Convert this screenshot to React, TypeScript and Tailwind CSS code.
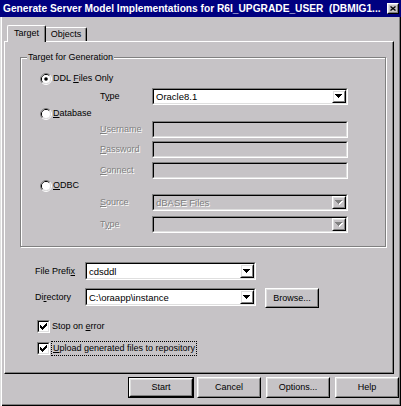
import React from "react";

const BG = "bg-[#c6c3c6]";

function U({ c }: { c: string }) {
  return <span className="underline underline-offset-[1px] decoration-1">{c}</span>;
}

function Sunken({
  className,
  inner,
  children,
}: {
  className: string;
  inner: string;
  children?: React.ReactNode;
}) {
  return (
    <div
      className={`flex border border-t-[#808080] border-l-[#808080] border-r-white border-b-white ${className}`}
    >
      <div
        className={`flex flex-1 min-w-0 border border-t-black border-l-black border-r-[#dfdfdf] border-b-[#dfdfdf] ${inner}`}
      >
        {children}
      </div>
    </div>
  );
}

function Raised({ className, children }: { className: string; children?: React.ReactNode }) {
  return (
    <div
      className={`flex border border-t-white border-l-white border-r-black border-b-black ${className}`}
    >
      <div className="flex flex-1 items-center justify-center border border-t-[#dfdfdf] border-l-[#dfdfdf] border-r-[#808080] border-b-[#808080]">
        {children}
      </div>
    </div>
  );
}

function Arrow({ disabled }: { disabled?: boolean }) {
  const d = "M0 0H7V1H6V2H5V3H4V4H3V3H2V2H1V1H0Z";
  return (
    <svg width="8" height="5" viewBox="0 0 8 5">
      {disabled && <path d={d} fill="#ffffff" transform="translate(1 1)" />}
      <path d={d} fill={disabled ? "#808080" : "#000000"} />
    </svg>
  );
}

function Combo({
  className,
  value,
  disabled,
}: {
  className: string;
  value?: string;
  disabled?: boolean;
}) {
  return (
    <Sunken className={className} inner={disabled ? BG : "bg-white"}>
      <div
        className={`flex flex-1 items-center pl-[2px] text-[9.5px] whitespace-nowrap overflow-hidden ${
          disabled ? "text-[#808080] [text-shadow:1px_1px_0_#fff]" : "text-black"
        }`}
      >
        {value}
      </div>
      <Raised className="w-[14px]">
        <Arrow disabled={disabled} />
      </Raised>
    </Sunken>
  );
}

function Radio({ checked }: { checked?: boolean }) {
  return (
    <svg width="12" height="12" viewBox="0 0 12 12" className="shrink-0">
      <path d="M2.11 9.89A5.5 5.5 0 0 1 9.89 2.11" stroke="#808080" fill="none" />
      <path d="M9.89 2.11A5.5 5.5 0 0 1 2.11 9.89" stroke="#ffffff" fill="none" />
      <path d="M2.82 9.18A4.5 4.5 0 0 1 9.18 2.82" stroke="#000000" fill="none" />
      <path d="M9.18 2.82A4.5 4.5 0 0 1 2.82 9.18" stroke="#dfdfdf" fill="none" />
      <circle cx="6" cy="6" r="4" fill="#ffffff" />
      {checked && <circle cx="6" cy="6" r="1.8" fill="#000000" />}
    </svg>
  );
}

function Check() {
  return (
    <Sunken className="w-[13px] h-[13px] shrink-0" inner="bg-white items-center justify-center">
      <svg width="7" height="7" viewBox="0 0 7 7">
        <path d="M0 2H1V3H2V4H3V3H4V2H5V1H6V0H7V3H6V4H5V5H4V6H3V7H2V6H1V5H0Z" fill="#000000" />
      </svg>
    </Sunken>
  );
}

function Dis({ children }: { children: React.ReactNode }) {
  return <span className="text-[#808080] [text-shadow:1px_1px_0_#fff]">{children}</span>;
}

function Field({ label, children, mt }: { label: React.ReactNode; children: React.ReactNode; mt: string }) {
  return (
    <div className={`flex items-center h-[17px] pl-[79px] ${mt}`}>
      <div className="w-[52px] whitespace-nowrap">{label}</div>
      {children}
    </div>
  );
}

function RadioRow({ label, checked, mt }: { label: React.ReactNode; checked?: boolean; mt: string }) {
  return (
    <div className={`flex items-center h-[13px] pl-[19px] ${mt}`}>
      <Radio checked={checked} />
      <span className="ml-[1px] whitespace-nowrap">{label}</span>
    </div>
  );
}

function Btn({ label, className }: { label: string; className: string }) {
  return (
    <Raised className={className}>
      <span className="whitespace-nowrap">{label}</span>
    </Raised>
  );
}

export default function App() {
  return (
    <div
      className={`w-[401px] h-[406px] ${BG} flex flex-col font-['Liberation_Sans',Arial,sans-serif] text-[9px] leading-[11px] text-black overflow-hidden shadow-[inset_1px_1px_0_#dfdfdf,inset_2px_2px_0_#ffffff,inset_-1px_-1px_0_#000000,inset_-2px_-2px_0_#808080]`}
    >
      {/* Title bar */}
      <div className="h-[17px] bg-[#000080] flex items-center justify-between pl-[3px] pr-[2px] shrink-0">
        <span className="text-white font-bold text-[10.2px] whitespace-nowrap">
          Generate Server Model Implementations for R6I_UPGRADE_USER&nbsp; (DBMIG1...
        </span>
        <Raised className={`w-[12px] h-[11px] ${BG}`}>
          <svg width="6" height="5" viewBox="0 0 6 5">
            <path d="M0.5 0.5L5.5 4.5M5.5 0.5L0.5 4.5" stroke="#000" strokeWidth="1.3" />
          </svg>
        </Raised>
      </div>

      {/* Tabs */}
      <div className="flex items-end h-[16px] mt-[8px] pl-[7px] shrink-0">
        <div
          className={`relative z-10 -mb-[1px] w-[39px] h-[17px] ${BG} border-l border-t border-l-white border-t-white border-r border-r-black rounded-tl-[2px] rounded-tr-[2px] shadow-[inset_-1px_0_0_#808080] flex items-center justify-center pb-[2px]`}
        >
          Target
        </div>
        <div className="w-[41px] h-[14px] border-t border-t-white border-r border-r-black rounded-tr-[2px] shadow-[inset_-1px_0_0_#808080] flex items-center justify-center">
          Objects
        </div>
      </div>

      {/* Panel */}
      <div className="ml-[4px] w-[390px] h-[333px] shrink-0 border border-t-white border-l-white border-r-black border-b-black shadow-[inset_-1px_-1px_0_#808080] flex flex-col">
        {/* Group box */}
        <div className="relative ml-[15px] mt-[15px] w-[366px] h-[190px] shrink-0 border border-[#808080] shadow-[inset_1px_1px_0_#ffffff,1px_1px_0_#ffffff] flex flex-col">
          <div className={`absolute left-[6px] -top-[6px] px-[1px] ${BG} whitespace-nowrap`}>
            Target for Generation
          </div>
          <RadioRow
            mt="mt-[14px]"
            checked
            label={
              <>
                DDL <U c="F" />
                iles Only
              </>
            }
          />
          <Field
            mt="mt-[3px]"
            label={
              <>
                T<U c="y" />
                pe
              </>
            }
          >
            <Combo className="w-[196px] h-[17px]" value="Oracle8.1" />
          </Field>
          <RadioRow
            mt="mt-[2px]"
            label={
              <>
                <U c="D" />
                atabase
              </>
            }
          />
          <Field
            mt="mt-[1px]"
            label={
              <Dis>
                <U c="U" />
                sername
              </Dis>
            }
          >
            <Sunken className="w-[196px] h-[17px]" inner={BG} />
          </Field>
          <Field
            mt="mt-[3px]"
            label={
              <Dis>
                <U c="P" />
                assword
              </Dis>
            }
          >
            <Sunken className="w-[196px] h-[17px]" inner={BG} />
          </Field>
          <Field
            mt="mt-[4px]"
            label={
              <Dis>
                <U c="C" />
                onnect
              </Dis>
            }
          >
            <Sunken className="w-[196px] h-[17px]" inner={BG} />
          </Field>
          <RadioRow
            mt="mt-[0px]"
            label={
              <>
                <U c="O" />
                DBC
              </>
            }
          />
          <Field
            mt="mt-[2px]"
            label={
              <Dis>
                <U c="S" />
                ource
              </Dis>
            }
          >
            <Combo className="w-[196px] h-[17px]" value="dBASE Files" disabled />
          </Field>
          <Field
            mt="mt-[5px]"
            label={
              <Dis>
                T<U c="y" />
                pe
              </Dis>
            }
          >
            <Combo className="w-[196px] h-[17px]" disabled />
          </Field>
        </div>

        {/* File prefix */}
        <div className="flex items-center h-[18px] mt-[15px] pl-[30px] shrink-0">
          <div className="w-[50px] whitespace-nowrap">
            File Prefi
            <U c="x" />
          </div>
          <Combo className="w-[171px] h-[18px]" value="cdsddl" />
        </div>

        {/* Directory */}
        <div className="flex items-start h-[20px] mt-[8px] pl-[30px] shrink-0">
          <div className="w-[50px] h-[18px] flex items-center whitespace-nowrap">
            <span>
              Di
              <U c="r" />
              ectory
            </span>
          </div>
          <Combo className="w-[171px] h-[18px]" value={"C:\\oraapp\\instance"} />
          <Btn label="Browse..." className="ml-[9px] w-[54px] h-[20px]" />
        </div>

        {/* Checkboxes */}
        <div className="flex items-center h-[13px] mt-[12px] pl-[32px] shrink-0">
          <Check />
          <span className="ml-[2px] whitespace-nowrap">
            Stop on <U c="e" />
            rror
          </span>
        </div>
        <div className="flex items-center h-[13px] mt-[9px] pl-[32px] shrink-0">
          <Check />
          <span className="ml-[1px] px-[1px] h-[15px] flex items-center border border-dotted border-black whitespace-nowrap">
            <span>
              <U c="U" />
              pload generated files to repository
            </span>
          </span>
        </div>
      </div>

      {/* Buttons */}
      <div className="flex mt-[3px] pl-[128px] shrink-0">
        <div className="w-[66px] h-[21px] border border-black flex">
          <Btn label="Start" className="flex-1" />
        </div>
        <Btn label="Cancel" className="ml-[3px] w-[64px] h-[21px]" />
        <Btn label="Options..." className="ml-[5px] w-[64px] h-[21px]" />
        <Btn label="Help" className="ml-[5px] w-[64px] h-[21px]" />
      </div>
    </div>
  );
}
